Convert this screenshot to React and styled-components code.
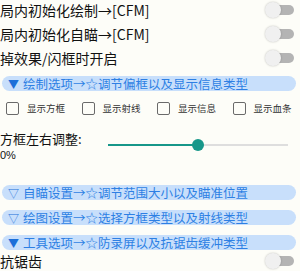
import React from 'react'
import styled, { createGlobalStyle } from 'styled-components'

const GlobalStyle = createGlobalStyle`
    body {
        margin: 0;
        background: #fdfdf8;
        font-family: "Noto Sans CJK SC", "Noto Sans", sans-serif;
        overflow: hidden;
    }
`

const SWITCHES = ['局内初始化绘制→[CFM]', '局内初始化自瞄→[CFM]', '掉效果/闪框时开启']
const CHECKS = ['显示方框', '显示射线', '显示信息', '显示血条']
const SECTIONS = [
    { open: false, title: '自瞄设置→☆调节范围大小以及瞄准位置' },
    { open: false, title: '绘图设置→☆选择方框类型以及射线类型' },
    { open: true, title: '工具选项→☆防录屏以及抗锯齿缓冲类型' },
]

const Page = styled.div`
    width: 300px;
    height: 271px;
    display: flex;
    flex-direction: column;
    overflow: hidden;
`

const SwitchList = styled.div`
    display: flex;
    flex-direction: column;
    margin-top: -2px;
`

const SwitchRow = styled.div`
    height: 24px;
    display: flex;
    align-items: center;
    justify-content: space-between;
    padding-right: 6px;
    font-size: 14px;
    color: #111;
    white-space: nowrap;
`

const Toggle = styled.div`
    position: relative;
    width: 29px;
    height: 16px;
    flex: none;
`

const Track = styled.div`
    position: absolute;
    left: 3px;
    right: 0;
    top: 3px;
    height: 10px;
    border-radius: 5px;
    background: #b4b4b4;
`

const Thumb = styled.div`
    position: absolute;
    left: 0;
    top: 0;
    width: 16px;
    height: 16px;
    border-radius: 50%;
    background: #f0f0f0;
    box-shadow: 0 0 2px rgba(0, 0, 0, 0.25);
`

const Header = styled.div`
    height: 15px;
    margin: ${(p) => p.$top}px 4px 0 2px;
    padding-left: 6px;
    display: flex;
    align-items: center;
    gap: 4px;
    border-radius: 8px;
    background: #c8dffb;
    color: #2d7fe4;
    font-size: 12.5px;
    white-space: nowrap;
`

const Arrow = styled.span`
    color: #1c6fd8;
    font-size: 11px;
`

const CheckRow = styled.div`
    height: 36px;
    display: grid;
    grid-template-columns: repeat(4, 75.5px);
    align-items: center;
    padding-left: 6px;
`

const CheckItem = styled.div`
    display: flex;
    align-items: center;
    gap: 8px;
    font-size: 9.5px;
    color: #333;
`

const Box = styled.div`
    width: 11px;
    height: 11px;
    border: 1.5px solid #6a6a6a;
    border-radius: 2px;
`

const SliderBlock = styled.div`
    display: flex;
    align-items: center;
    padding-top: 6px;
`

const SliderText = styled.div`
    width: 108px;
    flex: none;
`

const SliderLabel = styled.div`
    font-size: 13px;
    line-height: 16px;
    color: #111;
`

const SliderValue = styled.div`
    font-family: "Liberation Sans", Arial, sans-serif;
    font-size: 11px;
    line-height: 16px;
    color: #111;
`

const Slider = styled.div`
    position: relative;
    width: 180px;
    height: 12px;
    margin-bottom: 4px;
`

const Rail = styled.div`
    position: absolute;
    left: 0;
    right: 0;
    top: 5px;
    height: 2px;
    background: #dedede;
`

const Fill = styled.div`
    position: absolute;
    left: 0;
    top: 5px;
    height: 2px;
    background: #17978a;
`

const Knob = styled.div`
    position: absolute;
    top: 0;
    width: 12px;
    height: 12px;
    margin-left: -6px;
    border-radius: 50%;
    background: #17978a;
`

const BottomRow = styled(SwitchRow)`
    height: 22px;
`

const Switch = () => (
    <Toggle>
        <Track />
        <Thumb />
    </Toggle>
)

export default function App() {
    const sliderPos = 50
    return (
        <Page>
            <GlobalStyle />
            <SwitchList>
                {SWITCHES.map((s) => (
                    <SwitchRow key={s}>
                        {s}
                        <Switch />
                    </SwitchRow>
                ))}
            </SwitchList>
            <Header $top={6}>
                <Arrow>▼</Arrow>绘制选项→☆调节偏框以及显示信息类型
            </Header>
            <CheckRow>
                {CHECKS.map((c) => (
                    <CheckItem key={c}>
                        <Box />
                        {c}
                    </CheckItem>
                ))}
            </CheckRow>
            <SliderBlock>
                <SliderText>
                    <SliderLabel>方框左右调整:</SliderLabel>
                    <SliderValue>0%</SliderValue>
                </SliderText>
                <Slider>
                    <Rail />
                    <Fill style={{ width: `${sliderPos}%` }} />
                    <Knob style={{ left: `${sliderPos}%` }} />
                </Slider>
            </SliderBlock>
            {SECTIONS.map((s, i) => (
                <Header key={s.title} $top={i === 0 ? 22 : 10}>
                    <Arrow>{s.open ? '▼' : '▽'}</Arrow>{s.title}
                </Header>
            ))}
            <BottomRow>
                抗锯齿
                <Switch />
            </BottomRow>
        </Page>
    )
}
